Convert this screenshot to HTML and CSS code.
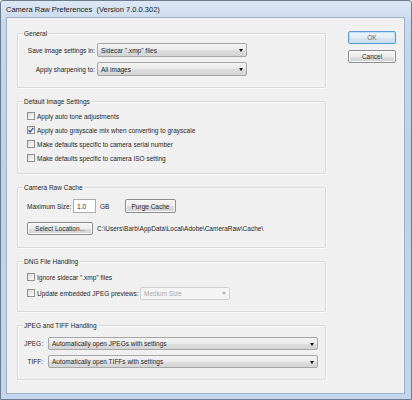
FILE: index.html
```html
<!DOCTYPE html>
<html>
<head>
<meta charset="utf-8">
<link rel="stylesheet" href="styles.css">
</head>
<body>
<div class="window">
  <div class="titlebar">Camera Raw Preferences&nbsp;&nbsp;(Version 7.0.0.302)</div>
  <div class="client">
    <div class="groups">
      <div class="group g-general">
        <span class="legend">General</span>
        <div class="form-grid">
          <span class="lbl">Save image settings in:</span>
          <div class="combo w150"><span>Sidecar ".xmp" files</span><i class="arrow"></i></div>
          <span class="lbl">Apply sharpening to:</span>
          <div class="combo w150"><span>All images</span><i class="arrow"></i></div>
        </div>
      </div>

      <div class="group g-default">
        <span class="legend">Default Image Settings</span>
        <div class="check-row"><span class="cb"></span><span>Apply auto tone adjustments</span></div>
        <div class="check-row"><span class="cb checked"><svg viewBox="0 0 8 8" width="8" height="8"><path d="M1.6 4.2 L3.2 5.9 L6.4 1.8" fill="none" stroke="#2f54a8" stroke-width="1.3"/></svg></span><span>Apply auto grayscale mix when converting to grayscale</span></div>
        <div class="check-row"><span class="cb"></span><span>Make defaults specific to camera serial number</span></div>
        <div class="check-row"><span class="cb"></span><span>Make defaults specific to camera ISO setting</span></div>
      </div>

      <div class="group g-cache">
        <span class="legend">Camera Raw Cache</span>
        <div class="cache-row1">
          <span class="max-label">Maximum Size:</span>
          <div class="textbox">1.0</div>
          <span class="gb">GB</span>
          <div class="btn purge">Purge Cache</div>
        </div>
        <div class="cache-row2">
          <div class="btn select-loc">Select Location...</div>
          <span>C:\Users\Barb\AppData\Local\Adobe\CameraRaw\Cache\</span>
        </div>
      </div>

      <div class="group g-dng">
        <span class="legend">DNG File Handling</span>
        <div class="check-row"><span class="cb"></span><span>Ignore sidecar ".xmp" files</span></div>
        <div class="check-row dng-row2">
          <span class="cb"></span><span class="dng-label">Update embedded JPEG previews:</span>
          <div class="combo disabled w90"><span>Medium Size</span><i class="arrow"></i></div>
        </div>
      </div>

      <div class="group g-jpeg">
        <span class="legend">JPEG and TIFF Handling</span>
        <div class="jpeg-grid">
          <span class="lbl">JPEG:</span>
          <div class="combo w270"><span>Automatically open JPEGs with settings</span><i class="arrow"></i></div>
          <span class="lbl">TIFF:</span>
          <div class="combo w270"><span>Automatically open TIFFs with settings</span><i class="arrow"></i></div>
        </div>
      </div>
    </div>

    <div class="buttons">
      <div class="btn dlg default">OK</div>
      <div class="btn dlg">Cancel</div>
    </div>
  </div>
</div>
</body>
</html>
```

FILE: styles.css
```css
* { box-sizing: border-box; }
html, body { margin: 0; padding: 0; background: #ffffff; }
body {
  font-family: "Liberation Sans", Arial, sans-serif;
  font-size: 6.5px;
  color: #1f1f1f;
  white-space: nowrap;
}
.window {
  width: 412px;
  height: 400px;
  border: 1px solid #6b7a8c;
  border-radius: 3px 3px 0 0;
  background: linear-gradient(180deg, #dce7f4 0%, #c7d8ec 6%, #bdd1e8 40%, #c3d6ec 100%);
  padding: 0 6px 5px 5px;
  display: flex;
  flex-direction: column;
}
.titlebar {
  height: 16px;
  line-height: 17px;
  font-size: 7.5px;
  color: #1a1a1a;
  flex: none;
}
.client {
  flex: 1;
  border: 1px solid #9cb0c8;
  background: #f0f0f0;
  display: flex;
  padding: 15px 0 0 10px;
}
.groups {
  width: 309px;
  display: flex;
  flex-direction: column;
  gap: 13px;
}
.group {
  position: relative;
  border: 1px solid #d9d9d9;
  box-shadow: inset 1px 1px 0 #fbfbfb, 1px 1px 0 #fbfbfb;
  border-radius: 2px;
}
.legend {
  position: absolute;
  top: -5px;
  left: 5px;
  line-height: 9px;
  padding: 0 1px;
  background: #f0f0f0;
  color: #1f1f1f;
}
.g-general { padding: 9px 0 11px 9px; }
.form-grid {
  display: grid;
  grid-template-columns: 68px 150px;
  column-gap: 2px;
  row-gap: 5px;
  align-items: center;
}
.lbl { text-align: right; }
.combo {
  position: relative;
  height: 14px;
  border: 1px solid #a6a6a6;
  border-radius: 2px;
  background: linear-gradient(180deg, #f3f3f3 0%, #ebebeb 50%, #dedede 51%, #d4d4d4 100%);
  display: flex;
  align-items: center;
  padding-left: 3px;
  color: #1f1f1f;
}
.combo .arrow {
  position: absolute;
  right: 3px;
  top: 50%;
  margin-top: -1px;
  width: 0; height: 0;
  border-left: 2.5px solid transparent;
  border-right: 2.5px solid transparent;
  border-top: 3px solid #111;
}
.w150 { width: 150px; }
.w90 { width: 90px; height: 13px; }
.w270 { width: 270px; height: 13px; }
.combo.disabled {
  background: #f4f4f4;
  border-color: #d0d0d0;
  color: #a8a8a8;
}
.combo.disabled .arrow { border-top-color: #b0b0b0; }

.g-default { padding: 7px 0 8px 9px; }
.check-row {
  height: 14px;
  display: flex;
  align-items: center;
}
.cb {
  width: 8px;
  height: 8px;
  border: 1px solid #909090;
  background: linear-gradient(135deg, #d8d8d8 0%, #f4f4f4 70%, #ffffff 100%);
  margin-right: 2px;
  flex: none;
  display: flex;
  align-items: center;
  justify-content: center;
}
.cb svg { display: block; margin: -1px; }

.g-cache { padding: 11px 0 12px 9px; }
.cache-row1 {
  height: 14px;
  display: flex;
  align-items: center;
}
.max-label { width: 46px; }
.textbox {
  width: 23px;
  height: 14px;
  border: 1px solid #abadb3;
  background: #ffffff;
  padding-left: 3px;
  display: flex;
  align-items: center;
}
.gb { margin-left: 4px; width: 25px; }
.btn {
  height: 13px;
  border: 1px solid #8c8c8c;
  border-radius: 2px;
  background: linear-gradient(180deg, #f4f4f4 0%, #ececec 50%, #dedede 51%, #d2d2d2 100%);
  display: flex;
  align-items: center;
  justify-content: center;
  color: #1f1f1f;
  box-shadow: inset 0 0 0 1px #fafafa;
}
.purge { width: 51px; height: 14px; }
.cache-row2 {
  margin-top: 9px;
  height: 13px;
  display: flex;
  align-items: center;
}
.select-loc { width: 66px; margin-right: 4px; }

.g-dng { padding: 8px 0 11px 9px; }
.dng-row2 { margin-top: 2px; }
.dng-label { width: 103px; }

.g-jpeg { padding: 11px 0 11px 4px; }
.jpeg-grid {
  display: grid;
  grid-template-columns: 21px 270px;
  column-gap: 5px;
  row-gap: 5px;
  align-items: center;
}

.buttons {
  margin-left: 22px;
  margin-top: -2px;
  display: flex;
  flex-direction: column;
  gap: 6px;
}
.dlg { width: 48px; height: 13px; }
.dlg.default {
  border-color: #5a9ad0;
  box-shadow: inset 0 0 0 1px #bfe0f5;
  background: linear-gradient(180deg, #eef5fa 0%, #e3edf5 50%, #d6e4ef 51%, #cfdfec 100%);
  color: #6a6a6a;
}
```
